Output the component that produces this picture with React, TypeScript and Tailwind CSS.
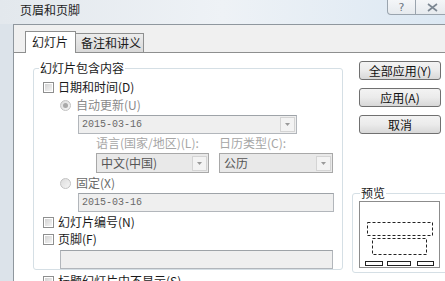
import type { ReactNode } from 'react';

const cjk = "font-['Noto_Sans_CJK_SC','Noto_Sans',sans-serif]";

function Checkbox() {
  return (
    <span className="w-[11px] h-[11px] shrink-0 border border-[#8e8f8f] bg-white p-[1px]">
      <span className="block w-full h-full bg-gradient-to-br from-[#d3d3d3] to-[#f4f4f4]" />
    </span>
  );
}

function Radio({ checked = false }: { checked?: boolean }) {
  return (
    <span className="w-[11px] h-[11px] shrink-0 rounded-full border border-[#c2c2c2] bg-gradient-to-br from-[#dcdcdc] to-[#f6f6f6] flex items-center justify-center">
      {checked && <span className="w-[5px] h-[5px] rounded-full bg-[#a9a9a9]" />}
    </span>
  );
}

function Arrow() {
  return (
    <span className="ml-auto mr-[1px] w-[15px] h-[15px] border border-[#d4d4d4] bg-[#f3f3f3] flex items-center justify-center">
      <svg width="5" height="3" viewBox="0 0 5 3">
        <path d="M0 0h5L2.5 3z" fill="#9a9a9a" />
      </svg>
    </span>
  );
}

function Field({ className, text, arrow = false }: { className: string; text?: string; arrow?: boolean }) {
  return (
    <div className={`${className} h-[19px] border border-[#b2b6bb] border-t-[#9ea3a8] bg-[#efefef] flex items-center pl-[3px]`}>
      {text && <span className="font-['Liberation_Mono',monospace] text-[10px] leading-[12px] text-[#6a6a6a]">{text}</span>}
      {arrow && <Arrow />}
    </div>
  );
}

function Select({ text }: { text: string }) {
  return (
    <div className="h-[20px] border border-[#a8a8a8] bg-[#e9e9e9] flex items-center pl-[4px]">
      <span className="text-[#555]">{text}</span>
      <Arrow />
    </div>
  );
}

function Button({ children }: { children: ReactNode }) {
  return (
    <div className="w-[82px] h-[19px] rounded-[3px] border border-[#707070] bg-gradient-to-b from-[#f3f3f3] via-[#ebebeb] to-[#d8d8d8] flex items-center justify-center text-[#111]">
      {children}
    </div>
  );
}

export default function App() {
  return (
    <div className={`w-[445px] h-[281px] overflow-hidden flex flex-col bg-[#dfe6ec] ${cjk} text-[12px] leading-[14px] text-[#1a1a1a]`}>
      {/* title bar */}
      <div className="h-[24px] shrink-0 flex items-start bg-gradient-to-r from-[#e3e8ed] via-[#eef2f6] to-[#dce8f3]">
        <span className="mt-[3px] ml-[20px] text-[#1e1e1e]">页眉和页脚</span>
        <div className="ml-auto -mr-[4px] flex h-[15px]">
          <div className="w-[29px] h-full border border-t-0 border-[#9aa4ae] rounded-bl-[4px] bg-gradient-to-b from-[#f4f6f8] to-[#e6eaee] flex items-center justify-center">
            <span className="font-['DejaVu_Sans',sans-serif] text-[11px] leading-[11px] text-[#6c7682]">?</span>
          </div>
          <div className="w-[33px] h-full border border-l-0 border-t-0 border-[#9aa4ae] bg-gradient-to-b from-[#f4f6f8] to-[#e6eaee] flex items-center justify-center">
            <svg width="11" height="9" viewBox="0 0 11 9">
              <path d="M1 1l9 7M10 1L1 8" stroke="#7c8792" strokeWidth="1.6" fill="none" />
            </svg>
          </div>
        </div>
      </div>

      <div className="flex-1 flex min-h-0">
        {/* left frame */}
        <div className="w-[13px] shrink-0 bg-[#dce3ea]" />

        {/* client area */}
        <div className="flex-1 flex flex-col min-w-0 border-l border-t border-[#8f979e] bg-[#f0f0f0]">
          {/* tabs */}
          <div className="h-[27px] shrink-0 flex items-end pl-[11px]">
            <div className="relative z-10 -mb-px w-[51px] h-[22px] border border-b-0 border-[#8e8f8f] bg-white flex items-start pt-[3px] pl-[6px]">
              幻灯片
            </div>
            <div className="-ml-px w-[69px] h-[19px] border border-b-0 border-[#8e8f8f] bg-gradient-to-b from-[#ececec] to-[#d9d9d9] flex items-start pt-[2px] pl-[5px]">
              备注和讲义
            </div>
          </div>

          {/* tab panel */}
          <div className="flex-1 flex border-t border-[#8e8f8f] bg-white min-h-0">
            {/* left column */}
            <div className="ml-[19px] flex flex-col shrink-0">
              <div className="mt-[15px] w-[310px] h-[204px] rounded-[3px] border border-[#d5dfe5] flex flex-col">
                <span className="-mt-[8px] ml-[5px] self-start px-[1px] bg-white h-[14px]">幻灯片包含内容</span>

                <div className="mt-[5px] h-[14px] flex items-center ml-[9px] gap-[4px]">
                  <Checkbox />
                  <span>日期和时间(D)</span>
                </div>

                <div className="mt-[4px] h-[14px] flex items-center ml-[26px] gap-[5px]">
                  <Radio checked />
                  <span className="text-[#8a8a8a]">自动更新(U)</span>
                </div>

                <Field className="mt-[3px] ml-[44px] w-[219px]" text="2015-03-16" arrow />

                <div className="ml-[62px] grid grid-cols-[113px_114px] gap-x-[10px]">
                  <span className="mt-[2px] h-[14px] text-[#a6a6a6]">语言(国家/地区)(L):</span>
                  <span className="mt-[2px] h-[14px] text-[#a6a6a6]">日历类型(C):</span>
                  <div className="mt-[3px]"><Select text="中文(中国)" /></div>
                  <div className="mt-[3px]"><Select text="公历" /></div>
                </div>

                <div className="mt-[3px] h-[14px] flex items-center ml-[26px] gap-[5px]">
                  <Radio />
                  <span className="text-[#6a6a6a]">固定(X)</span>
                </div>

                <Field className="mt-[3px] ml-[44px] w-[256px]" text="2015-03-16" />

                <div className="mt-[3px] h-[14px] flex items-center ml-[9px] gap-[4px]">
                  <Checkbox />
                  <span>幻灯片编号(N)</span>
                </div>

                <div className="mt-[3px] h-[14px] flex items-center ml-[9px] gap-[4px]">
                  <Checkbox />
                  <span>页脚(F)</span>
                </div>

                <Field className="mt-[4px] ml-[26px] w-[273px]" />
              </div>

              <div className="mt-[4px] h-[14px] flex items-center ml-[10px] gap-[4px]">
                <Checkbox />
                <span>标题幻灯片中不显示(S)</span>
              </div>
            </div>

            {/* right column */}
            <div className="ml-[9px] flex flex-col shrink-0">
              <div className="ml-[7px] mt-[8px] flex flex-col gap-[8px]">
                <Button>全部应用(Y)</Button>
                <Button>应用(A)</Button>
                <Button>取消</Button>
              </div>

              <div className="mt-[59px] w-[110px] h-[80px] rounded-[3px] border border-[#d5dfe5] flex flex-col">
                <span className="-mt-[8px] ml-[7px] self-start px-[1px] bg-white h-[14px]">预览</span>
                <div className="mt-[1px] ml-[6px] w-[81px] h-[67px] border border-[#8c8c8c] bg-white">
                  <svg width="79" height="65" viewBox="0 0 79 65">
                    <rect x="7.5" y="20.5" width="65" height="13" fill="none" stroke="#222" strokeDasharray="3 2" />
                    <rect x="12.5" y="36.5" width="54" height="16" fill="none" stroke="#222" strokeDasharray="3 2" />
                    <rect x="5.5" y="59.5" width="17" height="4" fill="none" stroke="#222" />
                    <rect x="27.5" y="59.5" width="23" height="4" fill="none" stroke="#222" />
                    <rect x="57.5" y="59.5" width="16" height="4" fill="none" stroke="#222" />
                  </svg>
                </div>
              </div>
            </div>
          </div>
        </div>
      </div>
    </div>
  );
}
